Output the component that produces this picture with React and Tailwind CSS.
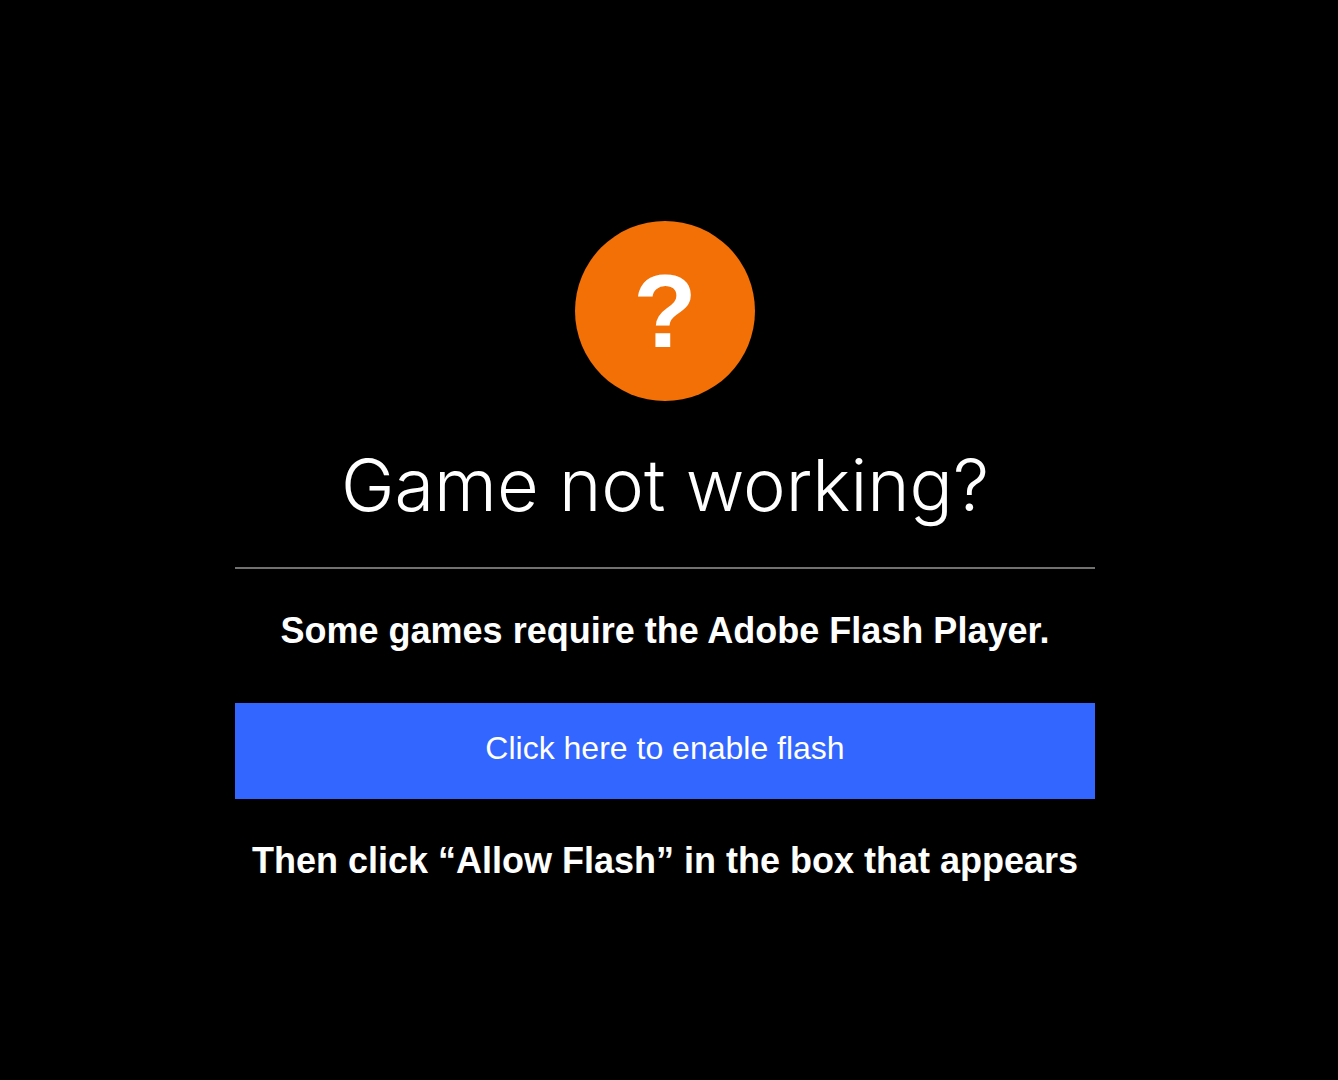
import React from "react";

const QuestionBadge = () => (
  <div className="flex h-[180px] w-[180px] items-center justify-center rounded-full bg-[#f27005]">
    <span className="text-[104px] leading-none font-bold">?</span>
  </div>
);

const App = () => {
  return (
    <div className="flex min-h-screen justify-center bg-black px-4 pt-[221px] pb-16 font-['Liberation_Sans',Arial,sans-serif] text-white">
      <main className="mr-2 flex w-full max-w-[860px] flex-col items-center self-start text-center">
        <QuestionBadge />

        <h1 className="mt-10 font-['Inter','Liberation_Sans',sans-serif] text-7xl leading-[88px] font-light">
          Game not working?
        </h1>

        <hr className="mt-[38px] w-full border-t-2 border-[#737070]" />

        <p className="mt-10 text-[36px] leading-[44px] font-bold">
          Some games require the Adobe Flash Player.
        </p>

        <button
          type="button"
          className="mt-[50px] h-24 w-full cursor-pointer bg-[#3366ff] pb-1.5 text-[32px]"
        >
          Click here to enable flash
        </button>

        <p className="mt-10 text-[36px] leading-[44px] font-bold">
          Then click “Allow Flash” in the box that appears
        </p>
      </main>
    </div>
  );
};

export default App;
